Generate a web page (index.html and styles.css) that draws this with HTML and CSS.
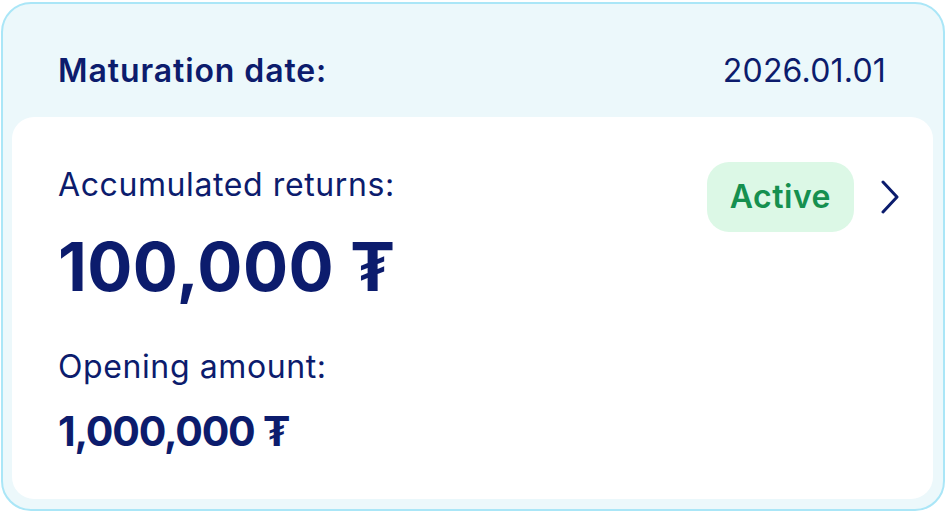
FILE: index.html
```html
<!DOCTYPE html>
<html>
<head>
<meta charset="utf-8">
<link rel="stylesheet" href="styles.css">
</head>
<body>
<div class="card">
  <div class="header">
    <span class="label">Maturation date:</span>
    <span class="date">2026.01.01</span>
  </div>
  <div class="body">
    <div class="info">
      <div class="sub">Accumulated returns:</div>
      <div class="big">100,000 ₮</div>
      <div class="sub sub2">Opening amount:</div>
      <div class="mid">1,000,000 ₮</div>
    </div>
    <div class="status">
      <span class="badge">Active</span>
      <svg class="chev" width="20" height="34" viewBox="0 0 20 34"><path d="M3 2 L17 17 L3 32" fill="none" stroke="#0b1c6d" stroke-width="3" stroke-linecap="round" stroke-linejoin="round"/></svg>
    </div>
  </div>
</div>
</body>
</html>
```
FILE: styles.css
```css
* { box-sizing: border-box; }
html, body { margin: 0; padding: 0; background: #ffffff; }
body { font-family: Inter, "Noto Sans", sans-serif; color: #0c1c6d; }
.card {
  margin: 2px 1px 2px 1px;
  width: 944px;
  height: 509px;
  border: 2px solid #aae6f7;
  border-radius: 30px;
  background: #ecf8fb;
  padding: 0 10px 10px 9px;
  display: flex;
  flex-direction: column;
}
.header {
  height: 113px;
  display: flex;
  align-items: flex-start;
  justify-content: space-between;
  padding: 47px 47px 0 46px;
  font-size: 32px;
  line-height: 40px;
}
.label { font-weight: 600; letter-spacing: 0.9px; }
.date { font-weight: 400; letter-spacing: 0.2px; }
.body {
  flex: 1;
  background: #ffffff;
  border-radius: 22px;
  display: flex;
  justify-content: space-between;
  align-items: flex-start;
  padding: 45px 33px 0 46px;
}
.sub { font-size: 32px; font-weight: 400; line-height: 40px; letter-spacing: 0.6px; margin-top: 3px; }
.big { font-size: 67px; font-weight: 700; line-height: 80px; margin-top: 22px; letter-spacing: 0.4px; }
.sub2 { margin-top: 40px; }
.mid { font-size: 41px; font-weight: 700; line-height: 50px; margin-top: 19px; letter-spacing: -1.2px; }
.status { display: flex; align-items: center; gap: 26px; height: 70px; }
.badge {
  background: #dcf8e6;
  color: #15904f;
  font-size: 32px;
  font-weight: 600;
  letter-spacing: 0.5px;
  border-radius: 22px;
  padding: 0 23px;
  height: 70px;
  line-height: 70px;
}
```
